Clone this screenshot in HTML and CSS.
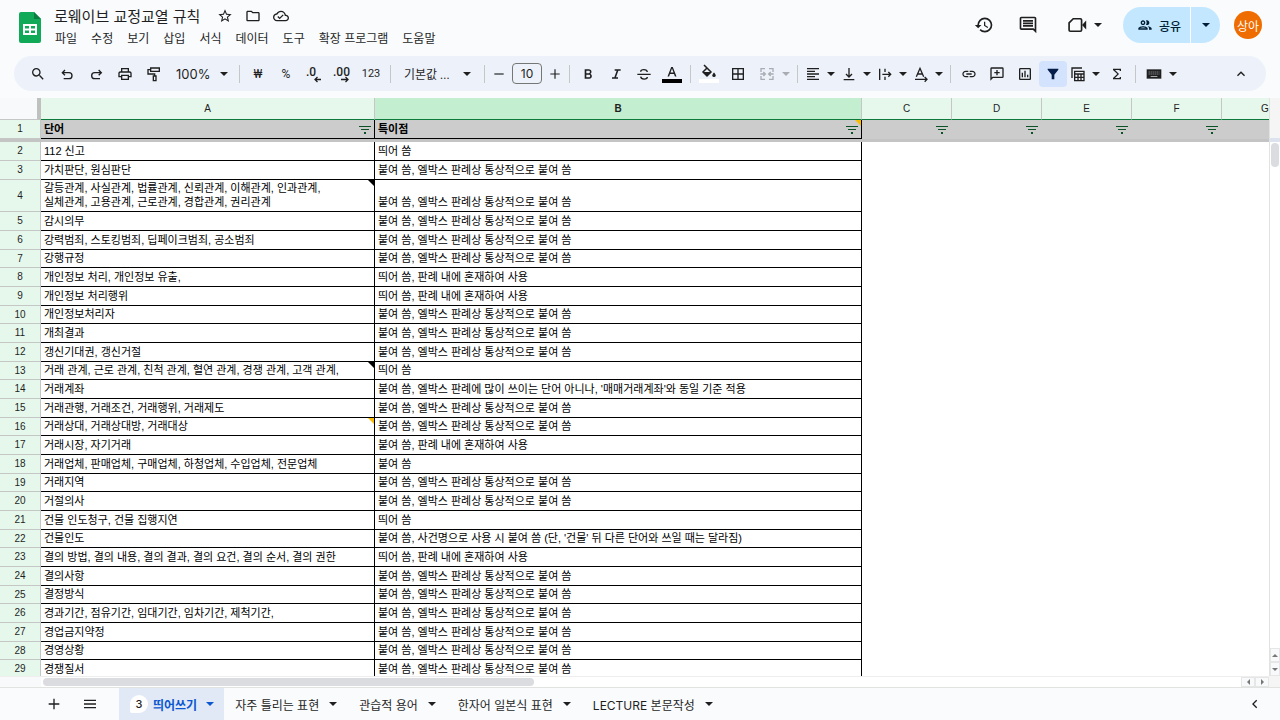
FILE: index.html
```
<!DOCTYPE html>
<html lang="ko">
    <head>
        <meta charset="UTF-8">
        <meta name="viewport" content="width=device-width, initial-scale=1.0">
        <title>로웨이브 교정교열 규칙</title>
        <link rel="stylesheet" href="styles.css">
    </head>
    <body>
        <header class="header">
            <svg class="logo" viewBox="0 0 22 31"><path fill="#0fa958" d="M2 0h13l7 7v22a2 2 0 0 1-2 2H2a2 2 0 0 1-2-2V2a2 2 0 0 1 2-2z"/><path fill="#087f3f" d="M15 0l7 7h-7z"/><path fill="#fff" fill-rule="evenodd" d="M4 12h14v11H4zM6 14v2.500h4V14zM12 14v2.500h4V14zM6 18.500V21h4v-2.500zM12 18.500V21h4v-2.500z"/></svg>
            <div class="heading">
                <div class="title-row">
                    <h1 class="title">로웨이브 교정교열 규칙</h1>
                    <button class="title-button" aria-label="별표"><svg viewBox="0 0 24 24"><path d="M22 9.240l-7.190-.620L12 2 9.190 8.630 2 9.240l5.460 4.730L5.820 21 12 17.270 18.180 21l-1.630-7.030L22 9.240zM12 15.400l-3.760 2.270 1-4.280-3.320-2.880 4.380-.380L12 6.100l1.710 4.040 4.380.380-3.320 2.880 1 4.280L12 15.400z"/></svg></button>
                    <button class="title-button" aria-label="이동"><svg viewBox="0 0 24 24"><path d="M9.170 6l2 2H20v10H4V6h5.170M10 4H4c-1.100 0-2 .900-2 2v12c0 1.100.900 2 2 2h16c1.100 0 2-.900 2-2V8c0-1.100-.900-2-2-2h-8l-2-2z"/></svg></button>
                    <button class="title-button" aria-label="문서 상태"><svg viewBox="0 0 24 24"><path d="M19.350 10.040C18.670 6.590 15.640 4 12 4 9.110 4 6.610 5.640 5.350 8.040 2.340 8.360 0 10.910 0 14c0 3.310 2.690 6 6 6h13c2.760 0 5-2.240 5-5 0-2.640-2.050-4.780-4.650-4.960zM19 18H6c-2.210 0-4-1.790-4-4 0-2.050 1.530-3.760 3.560-3.970l1.070-.110.500-.950C8.080 7.140 9.940 6 12 6c2.620 0 4.880 1.860 5.390 4.430l.300 1.500 1.530.110c1.560.100 2.780 1.410 2.780 2.960 0 1.650-1.350 3-3 3zm-9-3.820l-2.090-2.090L6.500 13.500 10 17l6.010-6.010-1.410-1.410z"/></svg></button>
                </div>
                <nav class="menu">
                    <button>파일</button>
                    <button>수정</button>
                    <button>보기</button>
                    <button>삽입</button>
                    <button>서식</button>
                    <button>데이터</button>
                    <button>도구</button>
                    <button>확장 프로그램</button>
                    <button>도움말</button>
                </nav>
            </div>
            <div class="actions">
                <button class="action" aria-label="버전 기록"><svg viewBox="0 0 24 24"><path d="M13.500 8H12v5l4.280 2.540.720-1.210-3.500-2.080V8M13 3a9 9 0 0 0-9 9H1l3.960 4.030L9 12H6a7 7 0 0 1 7-7 7 7 0 0 1 7 7 7 7 0 0 1-7 7c-1.930 0-3.680-.790-4.940-2.060l-1.420 1.420A8.896 8.896 0 0 0 13 21a9 9 0 0 0 9-9 9 9 0 0 0-9-9"/></svg></button>
                <button class="action" aria-label="댓글"><svg viewBox="0 0 24 24"><path d="M21.990 4c0-1.100-.890-2-1.990-2H4c-1.100 0-2 .900-2 2v12c0 1.100.900 2 2 2h14l4 4-.010-18zM20 4v13.170L18.830 16H4V4h16zM6 12h12v2H6zm0-3h12v2H6zm0-3h12v2H6z"/></svg></button>
                <button class="action action-call" aria-label="통화"><svg viewBox="0 0 24 24"><path fill="none" stroke="currentColor" stroke-width="2" d="M7.500 4.500H16a1.500 1.500 0 0 1 1.500 1.500v12a1.500 1.500 0 0 1-1.500 1.500H4A1.500 1.500 0 0 1 2.500 18V9.500z"/><path d="M18 12l5-5.500v11z"/></svg><i class="caret"></i></button>
                <div class="share">
                    <button class="share-main"><svg viewBox="0 0 24 24"><path d="M9 13.750c-2.340 0-7 1.170-7 3.500V19h14v-1.750c0-2.330-4.660-3.500-7-3.500zM4.340 17c.840-.580 2.870-1.250 4.660-1.250s3.820.670 4.660 1.250H4.340zM9 12c1.930 0 3.500-1.570 3.500-3.500S10.930 5 9 5 5.500 6.570 5.500 8.500 7.070 12 9 12zm0-5c.830 0 1.500.670 1.500 1.500S9.830 10 9 10s-1.500-.670-1.500-1.500S8.170 7 9 7zm7.040 6.810c1.160.840 1.960 1.960 1.960 3.440V19h4v-1.750c0-2.020-3.500-3.170-5.960-3.440zM15 12c1.930 0 3.500-1.570 3.500-3.500S16.930 5 15 5c-.540 0-1.040.130-1.500.350.630.890 1 1.980 1 3.150s-.370 2.260-1 3.150c.460.220.960.350 1.500.350z"/></svg>공유</button>
                    <button class="share-more" aria-label="공유 옵션"><i class="caret"></i></button>
                </div>
                <button class="avatar">상아</button>
            </div>
        </header>

        <div class="toolbar">
            <div class="group group-loose">
                <button class="tool" aria-label="검색"><svg viewBox="0 0 24 24"><path d="M15.500 14h-.790l-.280-.270A6.471 6.471 0 0 0 16 9.500 6.500 6.500 0 1 0 9.500 16c1.610 0 3.090-.590 4.230-1.570l.270.280v.790l5 4.990L20.490 19l-4.990-5zm-6 0C7.010 14 5 11.990 5 9.500S7.010 5 9.500 5 14 7.010 14 9.500 11.990 14 9.500 14z"/></svg></button>
                <button class="tool" aria-label="실행취소"><svg viewBox="0 0 24 24"><path class="line" d="M9 6l-4 4 4 4M5.500 10H15a4.500 4.500 0 0 1 0 9H7"/></svg></button>
                <button class="tool" aria-label="재실행"><svg viewBox="0 0 24 24"><path class="line" d="M16 6l4 4-4 4M19.500 10H10a4.500 4.500 0 0 0 0 9h8"/></svg></button>
                <button class="tool" aria-label="인쇄"><svg viewBox="0 0 24 24"><path d="M19 8h-1V3H6v5H5c-1.660 0-3 1.340-3 3v6h4v4h12v-4h4v-6c0-1.660-1.340-3-3-3zM8 5h8v3H8V5zm8 14H8v-4h8v4zm2-4v-2H6v2H4v-4c0-.550.450-1 1-1h14c.550 0 1 .450 1 1v4h-2z"/></svg></button>
                <button class="tool" aria-label="서식 복사"><svg viewBox="0 0 24 24"><path class="line" d="M7 3h13v5H7zM7 5.500H3V12h10v3M11 15h4v7h-4z"/></svg></button>
                <button class="zoom">100%<i class="caret"></i></button>
            </div>
            <i class="divider"></i>
            <div class="group">
                <button class="tool">₩</button>
                <button class="tool tool-percent">%</button>
                <button class="tool" aria-label="소수점 자릿수 감소"><svg viewBox="0 0 16 16"><text x="0" y="10">.0</text><path class="thin" d="M15 13.500H9M11.500 11L9 13.500l2.500 2.500"/></svg></button>
                <button class="tool" aria-label="소수점 자릿수 증가"><svg viewBox="0 0 16 16"><text x="-1" y="10">.00</text><path class="thin" d="M7 13.500h6.500M11.500 11l2.500 2.500-2.500 2.500"/></svg></button>
                <button class="tool tool-number">123</button>
            </div>
            <i class="divider"></i>
            <button class="font-name">기본값 ...<i class="caret"></i></button>
            <i class="divider"></i>
            <div class="group font-size">
                <button class="step" aria-label="글꼴 크기 줄이기"><svg viewBox="0 0 24 24"><path d="M4 11h16v2H4z"/></svg></button>
                <input type="text" value="10" aria-label="글꼴 크기">
                <button class="step" aria-label="글꼴 크기 늘리기"><svg viewBox="0 0 24 24"><path d="M20 13h-7v7h-2v-7H4v-2h7V4h2v7h7z"/></svg></button>
            </div>
            <i class="divider"></i>
            <div class="group">
                <button class="tool" aria-label="굵게"><svg viewBox="0 0 24 24"><path d="M15.600 11.790c.970-.670 1.650-1.770 1.650-2.790 0-2.260-1.750-4-4-4H7v14h7.040c2.090 0 3.710-1.700 3.710-3.790 0-1.520-.860-2.820-2.150-3.420zM9.500 7.200h3.700c1 0 1.700.800 1.700 1.800s-.700 1.800-1.700 1.800H9.500V7.200zm4 9.600h-4v-3.700h4c1 0 1.800.800 1.800 1.850s-.800 1.850-1.800 1.850z"/></svg></button>
                <button class="tool" aria-label="기울임꼴"><svg viewBox="0 0 24 24"><path d="M10 5v2.300h3l-3.500 9.400H6V19h9v-2.300h-3l3.500-9.400H19V5z"/></svg></button>
                <button class="tool" aria-label="취소선"><svg viewBox="0 0 24 24"><path class="line" d="M2 12.500h20M17 9c-.500-5-10-4.500-10-.500M7 16c.500 5 10 4.500 10 .500"/></svg></button>
                <button class="tool" aria-label="텍스트 색상"><svg class="swatch" viewBox="0 0 22 20"><path d="M10.200 3h1.600l3.700 9.500h-1.600l-.900-2.500H9l-.900 2.500H6.500zM9.500 8.600h3L11 4.600z"/><path fill="#000" d="M1 15h20v4H1z"/></svg></button>
            </div>
            <i class="divider"></i>
            <div class="group group-loose">
                <button class="tool" aria-label="채우기 색상"><svg class="swatch" viewBox="0 0 22 20"><path fill="none" stroke="currentColor" stroke-width="1.500" d="M6 1l7 7-4 4-4-4 4-4"/><path d="M5 8h8l-4 4z"/><path d="M16 8.500s-1.700 1.900-1.700 2.900a1.700 1.700 0 0 0 3.400 0c0-1-1.700-2.900-1.700-2.900z"/><path fill="#fff" d="M1 15h20v4H1z"/></svg></button>
                <button class="tool" aria-label="테두리"><svg viewBox="0 0 24 24"><path d="M3 3v18h18V3H3zm8 16H5v-6h6v6zm0-8H5V5h6v6zm8 8h-6v-6h6v6zm0-8h-6V5h6v6z"/></svg></button>
                <button class="tool-menu tool-menu-wide" disabled aria-label="셀 병합"><svg viewBox="0 0 24 24"><path class="line" d="M9 4H3v5M15 4h6v5M9 20H3v-5M15 20h6v-5M2 12h7M6.500 9L9.500 12l-3 3M22 12h-7M17.500 9l-3 3 3 3"/></svg><i class="caret"></i></button>
            </div>
            <i class="divider"></i>
            <div class="group">
                <button class="tool-menu" aria-label="가로 맞춤"><svg viewBox="0 0 24 24"><path d="M15 15H3v2h12v-2zm0-8H3v2h12V7zM3 13h18v-2H3v2zm0 8h18v-2H3v2zM3 3v2h18V3H3z"/></svg><i class="caret"></i></button>
                <button class="tool-menu" aria-label="세로 맞춤"><svg viewBox="0 0 24 24"><path class="line" d="M12 3v13M7.500 12l4.500 4.500 4.500-4.500M4 20.500h16"/></svg><i class="caret"></i></button>
                <button class="tool-menu" aria-label="텍스트 줄바꿈"><svg viewBox="0 0 24 24"><path class="line" d="M4 4v17M12 4v5M12 16v5M8 12.500h12M17 9l3.500 3.500L17 16"/></svg><i class="caret"></i></button>
                <button class="tool-menu" aria-label="텍스트 회전"><svg viewBox="0 0 24 24"><path class="line" d="M5 16L10.500 3.500 16 16M7 12h7M3 20h17M17.500 16.500L21 20l-3.500 3.500"/></svg><i class="caret"></i></button>
            </div>
            <i class="divider"></i>
            <div class="group">
                <button class="tool" aria-label="링크 삽입"><svg viewBox="0 0 24 24"><path d="M3.900 12c0-1.710 1.390-3.100 3.100-3.100h4V7H7c-2.760 0-5 2.240-5 5s2.240 5 5 5h4v-1.900H7c-1.710 0-3.100-1.390-3.100-3.100zM8 13h8v-2H8v2zm9-6h-4v1.900h4c1.710 0 3.100 1.390 3.100 3.100s-1.390 3.100-3.100 3.100h-4V17h4c2.760 0 5-2.240 5-5s-2.240-5-5-5z"/></svg></button>
                <button class="tool" aria-label="댓글 삽입"><svg viewBox="0 0 24 24"><path d="M4 2h16a2 2 0 0 1 2 2v12a2 2 0 0 1-2 2H6l-4 4V4a2 2 0 0 1 2-2zm0 2v13.200L5.200 16H20V4H4zm7 2h2v3h3v2h-3v3h-2v-3H8V9h3V6z"/></svg></button>
                <button class="tool" aria-label="차트 삽입"><svg viewBox="0 0 24 24"><path d="M9 17H7v-7h2v7zm4 0h-2V7h2v10zm4 0h-2v-4h2v4zm2 2H5V5h14v14zm0-16H5c-1.100 0-2 .900-2 2v14c0 1.100.900 2 2 2h14c1.100 0 2-.900 2-2V5c0-1.100-.900-2-2-2z"/></svg></button>
                <button class="tool tool-active" aria-label="필터"><svg viewBox="0 0 24 24"><path d="M4 4h16v1.500L14 13v7h-4v-7L4 5.500z"/></svg></button>
                <button class="tool-menu" aria-label="필터 보기"><svg viewBox="0 0 24 24"><path class="line" d="M7 8h14v14H7zM7 12h14M7 17h14M12 12v10M16.500 12v10M3 18V3h15"/></svg><i class="caret"></i></button>
                <button class="tool" aria-label="함수"><svg viewBox="0 0 24 24"><path d="M18 4H6v2l6.500 6L6 18v2h12v-3.500h-2V18H9l6-6-6-6h7v1.500h2z"/></svg></button>
            </div>
            <i class="divider"></i>
            <button class="tool-menu tool-menu-wide" aria-label="입력 도구"><svg viewBox="0 0 24 24"><path d="M1 5h22v14H1z"/><path fill="none" stroke="#edf2fa" stroke-dasharray="1.500 1.500" d="M4 9h16M4 12h16"/><path fill="#edf2fa" d="M7 15h10v1H7z"/></svg><i class="caret"></i></button>
            <button class="tool tool-collapse" aria-label="메뉴 숨기기"><svg viewBox="0 0 24 24"><path d="M12 8l-6 6 1.410 1.410L12 10.830l4.590 4.580L18 14z"/></svg></button>
        </div>

        <main class="workspace">
            <div class="sheet">
                <table>
                    <colgroup>
                        <col class="col-number">
                        <col class="col-a">
                        <col class="col-b">
                        <col class="col-rest" span="4">
                        <col>
                    </colgroup>
                    <thead>
                        <tr class="letters">
                            <td class="corner"></td>
                            <th scope="col">A</th>
                            <th scope="col" class="selected">B</th>
                            <th scope="col">C</th>
                            <th scope="col">D</th>
                            <th scope="col">E</th>
                            <th scope="col">F</th>
                            <th scope="col">G</th>
                        </tr>
                        <tr class="titles">
                            <th scope="row">1</th>
                            <td class="cell">단어<svg class="filter" viewBox="0 0 12 8"><path d="M0 0h12v1H0zM2 3h8v1H2zM5 6h2v2H5z"/></svg></td>
                            <td class="cell note note-yellow">특이점<svg class="filter" viewBox="0 0 12 8"><path d="M0 0h12v1H0zM2 3h8v1H2zM5 6h2v2H5z"/></svg></td>
                            <td><svg class="filter" viewBox="0 0 12 8"><path d="M0 0h12v1H0zM2 3h8v1H2zM5 6h2v2H5z"/></svg></td>
                            <td><svg class="filter" viewBox="0 0 12 8"><path d="M0 0h12v1H0zM2 3h8v1H2zM5 6h2v2H5z"/></svg></td>
                            <td><svg class="filter" viewBox="0 0 12 8"><path d="M0 0h12v1H0zM2 3h8v1H2zM5 6h2v2H5z"/></svg></td>
                            <td><svg class="filter" viewBox="0 0 12 8"><path d="M0 0h12v1H0zM2 3h8v1H2zM5 6h2v2H5z"/></svg></td>
                            <td></td>
                        </tr>
                        <tr class="freeze"><td colspan="8"></td></tr>
                    </thead>
                    <tbody>
                        <tr><th scope="row">2</th><td class="cell">112 신고</td><td class="cell">띄어 씀</td></tr>
                        <tr><th scope="row">3</th><td class="cell">가치판단, 원심판단</td><td class="cell">붙여 씀, 엘박스 판례상 통상적으로 붙여 씀</td></tr>
                        <tr class="tall"><th scope="row">4</th><td class="cell note">갈등관계, 사실관계, 법률관계, 신뢰관계, 이해관계, 인과관계,<br>실체관계, 고용관계, 근로관계, 경합관계, 권리관계</td><td class="cell">붙여 씀, 엘박스 판례상 통상적으로 붙여 씀</td></tr>
                        <tr><th scope="row">5</th><td class="cell">감시의무</td><td class="cell">붙여 씀, 엘박스 판례상 통상적으로 붙여 씀</td></tr>
                        <tr><th scope="row">6</th><td class="cell">강력범죄, 스토킹범죄, 딥페이크범죄, 공소범죄</td><td class="cell">붙여 씀, 엘박스 판례상 통상적으로 붙여 씀</td></tr>
                        <tr><th scope="row">7</th><td class="cell">강행규정</td><td class="cell">붙여 씀, 엘박스 판례상 통상적으로 붙여 씀</td></tr>
                        <tr><th scope="row">8</th><td class="cell">개인정보 처리, 개인정보 유출,</td><td class="cell">띄어 씀, 판례 내에 혼재하여 사용</td></tr>
                        <tr><th scope="row">9</th><td class="cell">개인정보 처리행위</td><td class="cell">띄어 씀, 판례 내에 혼재하여 사용</td></tr>
                        <tr><th scope="row">10</th><td class="cell">개인정보처리자</td><td class="cell">붙여 씀, 엘박스 판례상 통상적으로 붙여 씀</td></tr>
                        <tr><th scope="row">11</th><td class="cell">개최결과</td><td class="cell">붙여 씀, 엘박스 판례상 통상적으로 붙여 씀</td></tr>
                        <tr><th scope="row">12</th><td class="cell">갱신기대권, 갱신거절</td><td class="cell">붙여 씀, 엘박스 판례상 통상적으로 붙여 씀</td></tr>
                        <tr><th scope="row">13</th><td class="cell note">거래 관계, 근로 관계, 친척 관계, 혈연 관계, 경쟁 관계, 고객 관계,</td><td class="cell">띄어 씀</td></tr>
                        <tr><th scope="row">14</th><td class="cell">거래계좌</td><td class="cell">붙여 씀, 엘박스 판례에 많이 쓰이는 단어 아니나, '매매거래계좌'와 동일 기준 적용</td></tr>
                        <tr><th scope="row">15</th><td class="cell">거래관행, 거래조건, 거래행위, 거래제도</td><td class="cell">붙여 씀, 엘박스 판례상 통상적으로 붙여 씀</td></tr>
                        <tr><th scope="row">16</th><td class="cell note note-yellow">거래상대, 거래상대방, 거래대상</td><td class="cell">붙여 씀, 엘박스 판례상 통상적으로 붙여 씀</td></tr>
                        <tr><th scope="row">17</th><td class="cell">거래시장, 자기거래</td><td class="cell">붙여 씀, 판례 내에 혼재하여 사용</td></tr>
                        <tr><th scope="row">18</th><td class="cell">거래업체, 판매업체, 구매업체, 하청업체, 수입업체, 전문업체</td><td class="cell">붙여 씀</td></tr>
                        <tr><th scope="row">19</th><td class="cell">거래지역</td><td class="cell">붙여 씀, 엘박스 판례상 통상적으로 붙여 씀</td></tr>
                        <tr><th scope="row">20</th><td class="cell">거절의사</td><td class="cell">붙여 씀, 엘박스 판례상 통상적으로 붙여 씀</td></tr>
                        <tr><th scope="row">21</th><td class="cell">건물 인도청구, 건물 집행지연</td><td class="cell">띄어 씀</td></tr>
                        <tr><th scope="row">22</th><td class="cell">건물인도</td><td class="cell">붙여 씀, 사건명으로 사용 시 붙여 씀 (단, '건물' 뒤 다른 단어와 쓰일 때는 달라짐)</td></tr>
                        <tr><th scope="row">23</th><td class="cell">결의 방법, 결의 내용, 결의 결과, 결의 요건, 결의 순서, 결의 권한</td><td class="cell">띄어 씀, 판례 내에 혼재하여 사용</td></tr>
                        <tr><th scope="row">24</th><td class="cell">결의사항</td><td class="cell">붙여 씀, 엘박스 판례상 통상적으로 붙여 씀</td></tr>
                        <tr><th scope="row">25</th><td class="cell">결정방식</td><td class="cell">붙여 씀, 엘박스 판례상 통상적으로 붙여 씀</td></tr>
                        <tr><th scope="row">26</th><td class="cell">경과기간, 점유기간, 임대기간, 임차기간, 제척기간,</td><td class="cell">붙여 씀, 엘박스 판례상 통상적으로 붙여 씀</td></tr>
                        <tr><th scope="row">27</th><td class="cell">경업금지약정</td><td class="cell">붙여 씀, 엘박스 판례상 통상적으로 붙여 씀</td></tr>
                        <tr><th scope="row">28</th><td class="cell">경영상황</td><td class="cell">붙여 씀, 엘박스 판례상 통상적으로 붙여 씀</td></tr>
                        <tr><th scope="row">29</th><td class="cell">경쟁질서</td><td class="cell">붙여 씀, 엘박스 판례상 통상적으로 붙여 씀</td></tr>
                    </tbody>
                </table>
            </div>
            <div class="scroll-y">
                <div class="scroll-head"></div>
                <div class="thumb"></div>
                <button class="arrow" aria-label="위로"><i class="up"></i></button>
                <button class="arrow" aria-label="아래로"><i class="down"></i></button>
            </div>
            <div class="scroll-x">
                <div class="track"><div class="thumb"></div></div>
                <button class="arrow" aria-label="왼쪽으로"><i class="left"></i></button>
                <button class="arrow" aria-label="오른쪽으로"><i class="right"></i></button>
            </div>
            <div class="scroll-corner"></div>
        </main>

        <footer class="tabs">
            <button class="tab-tool" aria-label="시트 추가"><svg viewBox="0 0 24 24"><path d="M20 13h-7v7h-2v-7H4v-2h7V4h2v7h7z"/></svg></button>
            <button class="tab-tool" aria-label="모든 시트"><svg viewBox="0 0 24 24"><path d="M3 5.500h18v2H3zM3 11h18v2H3zM3 16.500h18v2H3z"/></svg></button>
            <button class="tab tab-active"><span class="badge">3</span>띄어쓰기<i class="caret"></i></button>
            <button class="tab">자주 틀리는 표현<i class="caret"></i></button>
            <button class="tab">관습적 용어<i class="caret"></i></button>
            <button class="tab">한자어 일본식 표현<i class="caret"></i></button>
            <button class="tab">LECTURE 본문작성<i class="caret"></i></button>
            <button class="tab-tool tab-panel" aria-label="측면 패널 표시"><svg viewBox="0 0 24 24"><path d="M16.400 5.400L14.500 3.500 6 12l8.500 8.500 1.900-1.900L9.800 12z"/></svg></button>
        </footer>
    </body>
</html>
```
FILE: styles.css
```
:root {
    --ink: #1f1f1f;
    --page: #f9fbfd;
    --bar: #edf2fa;
    --green: #e6f8ec;
    --line: #c4c7c5;
}

* {
    box-sizing: border-box;
}

body {
    display: flex;
    flex-direction: column;
    height: 100vh;
    margin: 0;
    overflow: hidden;
    background: var(--page);
    color: var(--ink);
    font-family: "Noto Sans CJK KR", sans-serif;
    font-size: 12px;
}

button {
    display: flex;
    align-items: center;
    justify-content: center;
    margin: 0;
    padding: 0;
    border: 0;
    background: none;
    color: inherit;
    font: inherit;
    white-space: nowrap;
}

svg {
    display: block;
    flex: none;
    width: 16px;
    height: 16px;
    fill: currentColor;
    overflow: visible;
}

.line, .thin {
    fill: none;
    stroke: currentColor;
    stroke-width: 2;
}

.thin {
    stroke-width: 1.3;
}

.caret {
    flex: none;
    width: 0;
    border: 4px solid transparent;
    border-top-color: currentColor;
    border-bottom: 0;
}

/* Header */
.header {
    display: flex;
    flex: none;
    height: 56px;
    padding: 0 18px 0 19px;
}

.logo {
    width: 22px;
    height: 31px;
    margin: 12px 13px 0 0;
}

.heading {
    padding-top: 6px;
}

.title-row {
    display: flex;
    align-items: center;
    height: 20px;
}

.title {
    margin: 0 11px 0 0;
    font-size: 15px;
    font-weight: 400;
    line-height: 20px;
}

.title-button {
    width: 28px;
    height: 20px;
}

.menu {
    display: flex;
    gap: 14px;
    padding: 3px 0 0 1px;
    font-size: 12px;
    line-height: 18px;
}

.actions {
    display: flex;
    align-items: center;
    height: 50px;
    margin-left: auto;
}

.action {
    width: 44px;
    height: 36px;
}

.action svg {
    width: 20px;
    height: 20px;
}

.action-call {
    width: 64px;
    margin-left: 2px;
    margin-right: 7px;
    gap: 7px;
}

.share {
    display: flex;
    gap: 1px;
    height: 36px;
    margin-right: 14px;
    color: #001d35;
    font-weight: 500;
}

.share button {
    background: #c2e7ff;
}

.share-main {
    width: 67px;
    padding-left: 5px;
    gap: 6px;
    border-radius: 18px 0 0 18px;
}

.share-more {
    width: 29px;
    border-radius: 0 18px 18px 0;
}

.avatar {
    width: 28px;
    height: 28px;
    border-radius: 50%;
    background: #ef6c00;
    color: #fff;
}

/* Toolbar */
.toolbar {
    display: flex;
    flex: none;
    align-items: center;
    height: 35px;
    margin: 0 14px 7px;
    padding: 0 11px 0 10px;
    border-radius: 18px;
    background: var(--bar);
}

.group {
    display: flex;
    align-items: center;
}

.group-loose {
    gap: 1px;
}

.divider {
    width: 1px;
    height: 18px;
    margin: 0 4px;
    background: var(--line);
}

.tool {
    width: 28px;
    height: 26px;
    font-family: Roboto, "Noto Sans CJK KR", sans-serif;
}

.tool text {
    font-family: Roboto, sans-serif;
    font-size: 12px;
    font-weight: 500;
}

.tool-percent {
    font-size: 12px;
}

.tool-number {
    width: 30px;
    font-size: 11px;
}

.tool .swatch {
    width: 22px;
    height: 20px;
}

.tool-active {
    border-radius: 4px;
    background: #d3e3fd;
    color: #041e49;
}

.tool-collapse {
    margin-left: auto;
}

.zoom {
    justify-content: space-between;
    width: 66px;
    padding: 0 7px;
    font-family: Inter, sans-serif;
    font-size: 13px;
}

.font-name {
    justify-content: space-between;
    width: 85px;
    padding: 0 9px;
    font-family: Roboto, "Noto Sans CJK KR", sans-serif;
}

.font-size {
    gap: 3px;
}

.step {
    width: 20px;
    height: 26px;
}

.step svg {
    width: 14px;
    height: 14px;
}

.font-size input {
    width: 30px;
    height: 21px;
    padding: 0;
    border: 1px solid #747775;
    border-radius: 4px;
    background: transparent;
    color: var(--ink);
    font-family: Inter, sans-serif;
    font-size: 12px;
    text-align: center;
}

.tool-menu {
    justify-content: space-between;
    width: 36px;
    height: 26px;
    padding: 0 3px;
}

.tool-menu-wide {
    width: 40px;
    padding-left: 6px;
}

.tool-menu:disabled {
    color: #a9adb3;
}

/* Sheet */
.workspace {
    display: grid;
    flex: 1;
    grid-template-columns: minmax(0, 1fr) 11px;
    grid-template-rows: minmax(0, 1fr) 11px;
    min-height: 0;
    background: #fff;
}

.sheet {
    overflow: hidden;
}

table {
    width: 1309px;
    border-spacing: 0;
    table-layout: fixed;
}

.col-number {
    width: 41px;
}

.col-a {
    width: 334px;
}

.col-b {
    width: 487px;
}

.col-rest {
    width: 90px;
}

tr {
    height: 19px;
}

tbody tr:nth-child(3n) {
    height: 18px;
}

tbody tr.tall:nth-child(3n) {
    height: 32px;
}

td, th {
    padding: 0;
    line-height: 14px;
}

th {
    border-right: 1px solid var(--line);
    border-bottom: 1px solid var(--line);
    background: var(--green);
    font-family: "Liberation Sans", sans-serif;
    font-size: 10px;
    font-weight: 400;
}

.letters {
    height: 22px;
}

.letters th {
    border-bottom-color: #0b7a3b;
}

.letters .selected {
    background: #c4eed0;
    font-weight: 700;
}

.corner {
    border-right: 4px solid #c0c0c0;
    border-bottom: 1px solid var(--line);
    background: #f8f9fa;
}

.cell {
    position: relative;
    padding: 0 0 2px 3px;
    border-right: 1px solid #000;
    border-bottom: 1px solid #000;
    color: #000;
    font-family: "Liberation Sans", "Noto Sans CJK KR", sans-serif;
    font-size: 11px;
    vertical-align: bottom;
    white-space: nowrap;
}

.titles td {
    position: relative;
    background: #ccc;
    font-weight: 700;
}

.filter {
    position: absolute;
    top: 6px;
    right: 4px;
    width: 12px;
    height: 8px;
    color: #0d5226;
}

.cell .filter {
    right: 3px;
}

.note::after {
    content: "";
    position: absolute;
    top: 0;
    right: 0;
    border: 3px solid #000;
    border-bottom-color: transparent;
    border-left-color: transparent;
}

.note-yellow::after {
    border-top-color: #fbbc04;
    border-right-color: #fbbc04;
}

.freeze {
    height: 3px;
}

.freeze td {
    height: 3px;
    background: #c4c4c4;
    line-height: 0;
}

/* Scrollbars */
.scroll-y {
    display: flex;
    flex-direction: column;
    border-left: 1px solid #e1e3e1;
}

.scroll-head {
    height: 44px;
    border-bottom: 4px solid #dde3ee;
    background: #f5f5f5;
}

.scroll-y .thumb {
    width: 8px;
    height: 24px;
    margin: 1px 1px auto;
}

.thumb {
    border-radius: 4px;
    background: #dadce0;
}

.arrow {
    flex: none;
    border: 1px solid #e6e6e6;
    background: #f8f9fa;
    color: #777;
}

.scroll-y .arrow {
    height: 14px;
}

.arrow i {
    border: 3px solid transparent;
}

.arrow .up {
    border-top: 0;
    border-bottom-color: currentColor;
}

.arrow .down {
    border-bottom: 0;
    border-top-color: currentColor;
}

.arrow .left {
    border-left: 0;
    border-right-color: currentColor;
}

.arrow .right {
    border-right: 0;
    border-left-color: currentColor;
}

.scroll-x {
    display: flex;
    border-top: 1px solid #eee;
}

.scroll-x .arrow {
    width: 14px;
}

.track {
    flex: 1;
    padding: 1px 0 1px 2px;
    border-left: 41px solid #f8f9fa;
}

.track .thumb {
    width: 41%;
    height: 8px;
}

.scroll-corner {
    background: #f5f5f5;
}

/* Sheet tabs */
.tabs {
    display: flex;
    flex: none;
    align-items: stretch;
    height: 33px;
    padding: 0 11px 0 36px;
    border-top: 1px solid #e1e3e1;
    font-family: Inter, "Noto Sans CJK KR", sans-serif;
}

.tab-tool {
    width: 36px;
}

.tab-panel {
    width: 28px;
    margin-left: auto;
}

.tab-panel svg {
    width: 12px;
    height: 12px;
}

.tab {
    gap: 10px;
    padding: 0 11px;
}

.tab-active {
    gap: 9px;
    margin-left: 11px;
    padding-right: 10px;
    background: #e1e9f7;
    color: #0b57d0;
    font-weight: 700;
}

.badge {
    width: 18px;
    margin-right: -4px;
    border-radius: 9px 9px 9px 2px;
    background: #fff;
    color: var(--ink);
    font-size: 11px;
    font-weight: 500;
    line-height: 18px;
}
```
